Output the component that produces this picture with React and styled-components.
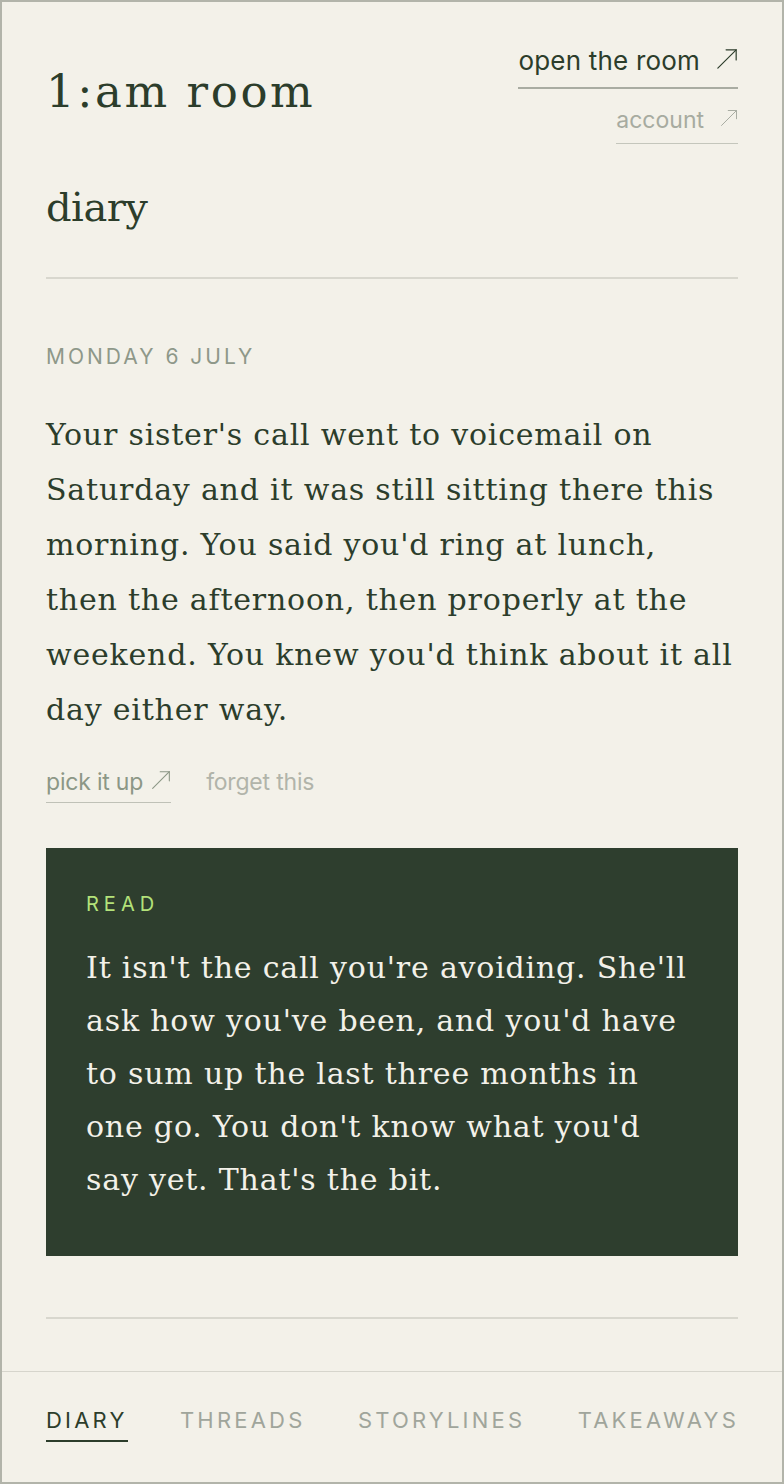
import React from 'react'
import styled, { createGlobalStyle } from 'styled-components'

const GlobalStyle = createGlobalStyle`
  html, body {
    margin: 0;
    padding: 0;
    background: #f3f1e9;
  }
  * { box-sizing: border-box; }
`

const serif = `"DejaVu Serif", "Liberation Serif", serif`
const sans = `Inter, "Liberation Sans", sans-serif`

function Arrow({ size = 22 }) {
    return (
        <svg width={size} height={size} viewBox="0 0 24 24" fill="none" stroke="currentColor" strokeWidth="1.3" strokeLinecap="round">
            <path d="M2 22 L22 2" />
            <path d="M11 2 H22 V13" />
        </svg>
    )
}

function App() {
    const tabs = ['diary', 'threads', 'storylines', 'takeaways']
    return (
        <>
            <GlobalStyle />
            <Shell>
                <Main>
                    <Header>
                        <Logo>1:am room</Logo>
                        <HeaderLinks>
                            <TopLink $primary>
                                open the room
                                <Arrow size={22} />
                            </TopLink>
                            <TopLink>
                                account
                                <Arrow size={18} />
                            </TopLink>
                        </HeaderLinks>
                    </Header>
                    <PageTitle>diary</PageTitle>
                    <Rule />
                    <Entry>
                        <DateLabel>Monday 6 July</DateLabel>
                        <EntryText>
                            Your sister's call went to voicemail on Saturday and it was still sitting there this morning. You said you'd ring at lunch, then the afternoon, then properly at the weekend. You knew you'd think about it all day either way.
                        </EntryText>
                        <Actions>
                            <ActionLink $underline>
                                pick it up
                                <Arrow size={20} />
                            </ActionLink>
                            <ActionLink $faint>forget this</ActionLink>
                        </Actions>
                        <ReadCard>
                            <CardLabel>Read</CardLabel>
                            <CardText>
                                It isn't the call you're avoiding. She'll ask how you've been, and you'd have to sum up the last three months in one go. You don't know what you'd say yet. That's the bit.
                            </CardText>
                        </ReadCard>
                    </Entry>
                    <Rule $bottom />
                </Main>
                <Nav>
                    {tabs.map(t => (
                        <Tab key={t} $active={t === 'diary'}>{t}</Tab>
                    ))}
                </Nav>
            </Shell>
        </>
    )
}

const Shell = styled.div`
    height: 100vh;
    min-height: 1484px;
    border: 2px solid #b2b4aa;
    display: flex;
    flex-direction: column;
    background: #f3f1e9;
    color: #2c3d2b;
`

const Main = styled.main`
    flex: 1;
    padding: 45px 44px 0;
`

const Header = styled.header`
    display: flex;
    justify-content: space-between;
    align-items: flex-start;
`

const Logo = styled.h1`
    margin: 22px 0 0;
    font-family: ${serif};
    font-weight: 400;
    font-size: 45px;
    line-height: 1;
    letter-spacing: 2.6px;
    color: #2c3d2b;
`

const HeaderLinks = styled.nav`
    display: flex;
    flex-direction: column;
    align-items: flex-end;
    gap: 19px;
`

const TopLink = styled.a`
    display: flex;
    align-items: center;
    justify-content: space-between;
    gap: 16px;
    font-family: ${sans};
    font-size: ${p => (p.$primary ? '26px' : '23px')};
    line-height: ${p => (p.$primary ? '28px' : '24px')};
    letter-spacing: ${p => (p.$primary ? '0.2px' : '0')};
    color: ${p => (p.$primary ? '#2c3d2b' : '#a7aba0')};
    padding-bottom: ${p => (p.$primary ? '12px' : '11px')};
    border-bottom: ${p => (p.$primary ? '2px solid #a9aca2' : '1.5px solid #c4c6bc')};
    cursor: pointer;
    svg { margin-top: -4px; }
`

const PageTitle = styled.h2`
    margin: 39px 0 0;
    font-family: ${serif};
    font-weight: 400;
    font-size: 40px;
    line-height: 48px;
    letter-spacing: -0.5px;
`

const Rule = styled.hr`
    margin: ${p => (p.$bottom ? '61px 0 0' : '46px 0 0')};
    border: 0;
    border-top: 2px solid #d8d7ce;
`

const Entry = styled.section`
    padding-top: 66px;
`

const DateLabel = styled.div`
    font-family: ${sans};
    font-size: 21px;
    line-height: 24px;
    letter-spacing: 3px;
    text-transform: uppercase;
    color: #8e9889;
`

const EntryText = styled.p`
    margin: 38px 0 0;
    font-family: ${serif};
    font-size: 30px;
    line-height: 55px;
    letter-spacing: 0.8px;
    color: #2c3d2b;
`

const Actions = styled.div`
    display: flex;
    align-items: flex-start;
    gap: 35px;
    margin-top: 32px;
`

const ActionLink = styled.a`
    display: flex;
    align-items: center;
    gap: 8px;
    font-family: ${sans};
    font-size: 23px;
    line-height: 26px;
    letter-spacing: -0.2px;
    color: ${p => (p.$faint ? '#b1b4aa' : '#8c9786')};
    padding-bottom: 7px;
    border-bottom: ${p => (p.$underline ? '1.5px solid #bfc1b7' : '1.5px solid transparent')};
    cursor: pointer;
    svg { margin-top: -4px; }
`

const ReadCard = styled.article`
    margin-top: 45px;
    background: #2e3e2e;
    padding: 46px 40px 50px;
`

const CardLabel = styled.div`
    font-family: ${sans};
    font-size: 20px;
    line-height: 20px;
    letter-spacing: 5px;
    text-transform: uppercase;
    color: #b3e27a;
`

const CardText = styled.p`
    margin: 27px 0 0;
    font-family: ${serif};
    font-size: 30px;
    line-height: 53px;
    letter-spacing: 0.8px;
    color: #f3f1e9;
`

const Nav = styled.nav`
    display: flex;
    justify-content: space-between;
    align-items: flex-start;
    border-top: 1.5px solid #d6d5cc;
    padding: 36px 44px 40px;
`

const Tab = styled.a`
    font-family: ${sans};
    font-size: 22px;
    line-height: 24px;
    letter-spacing: 3.2px;
    text-transform: uppercase;
    color: ${p => (p.$active ? '#2c3d2b' : '#a0a59b')};
    padding-bottom: 8px;
    border-bottom: 2.5px solid ${p => (p.$active ? '#2c3d2b' : 'transparent')};
    margin-right: -1px;
    cursor: pointer;
`

export default App
